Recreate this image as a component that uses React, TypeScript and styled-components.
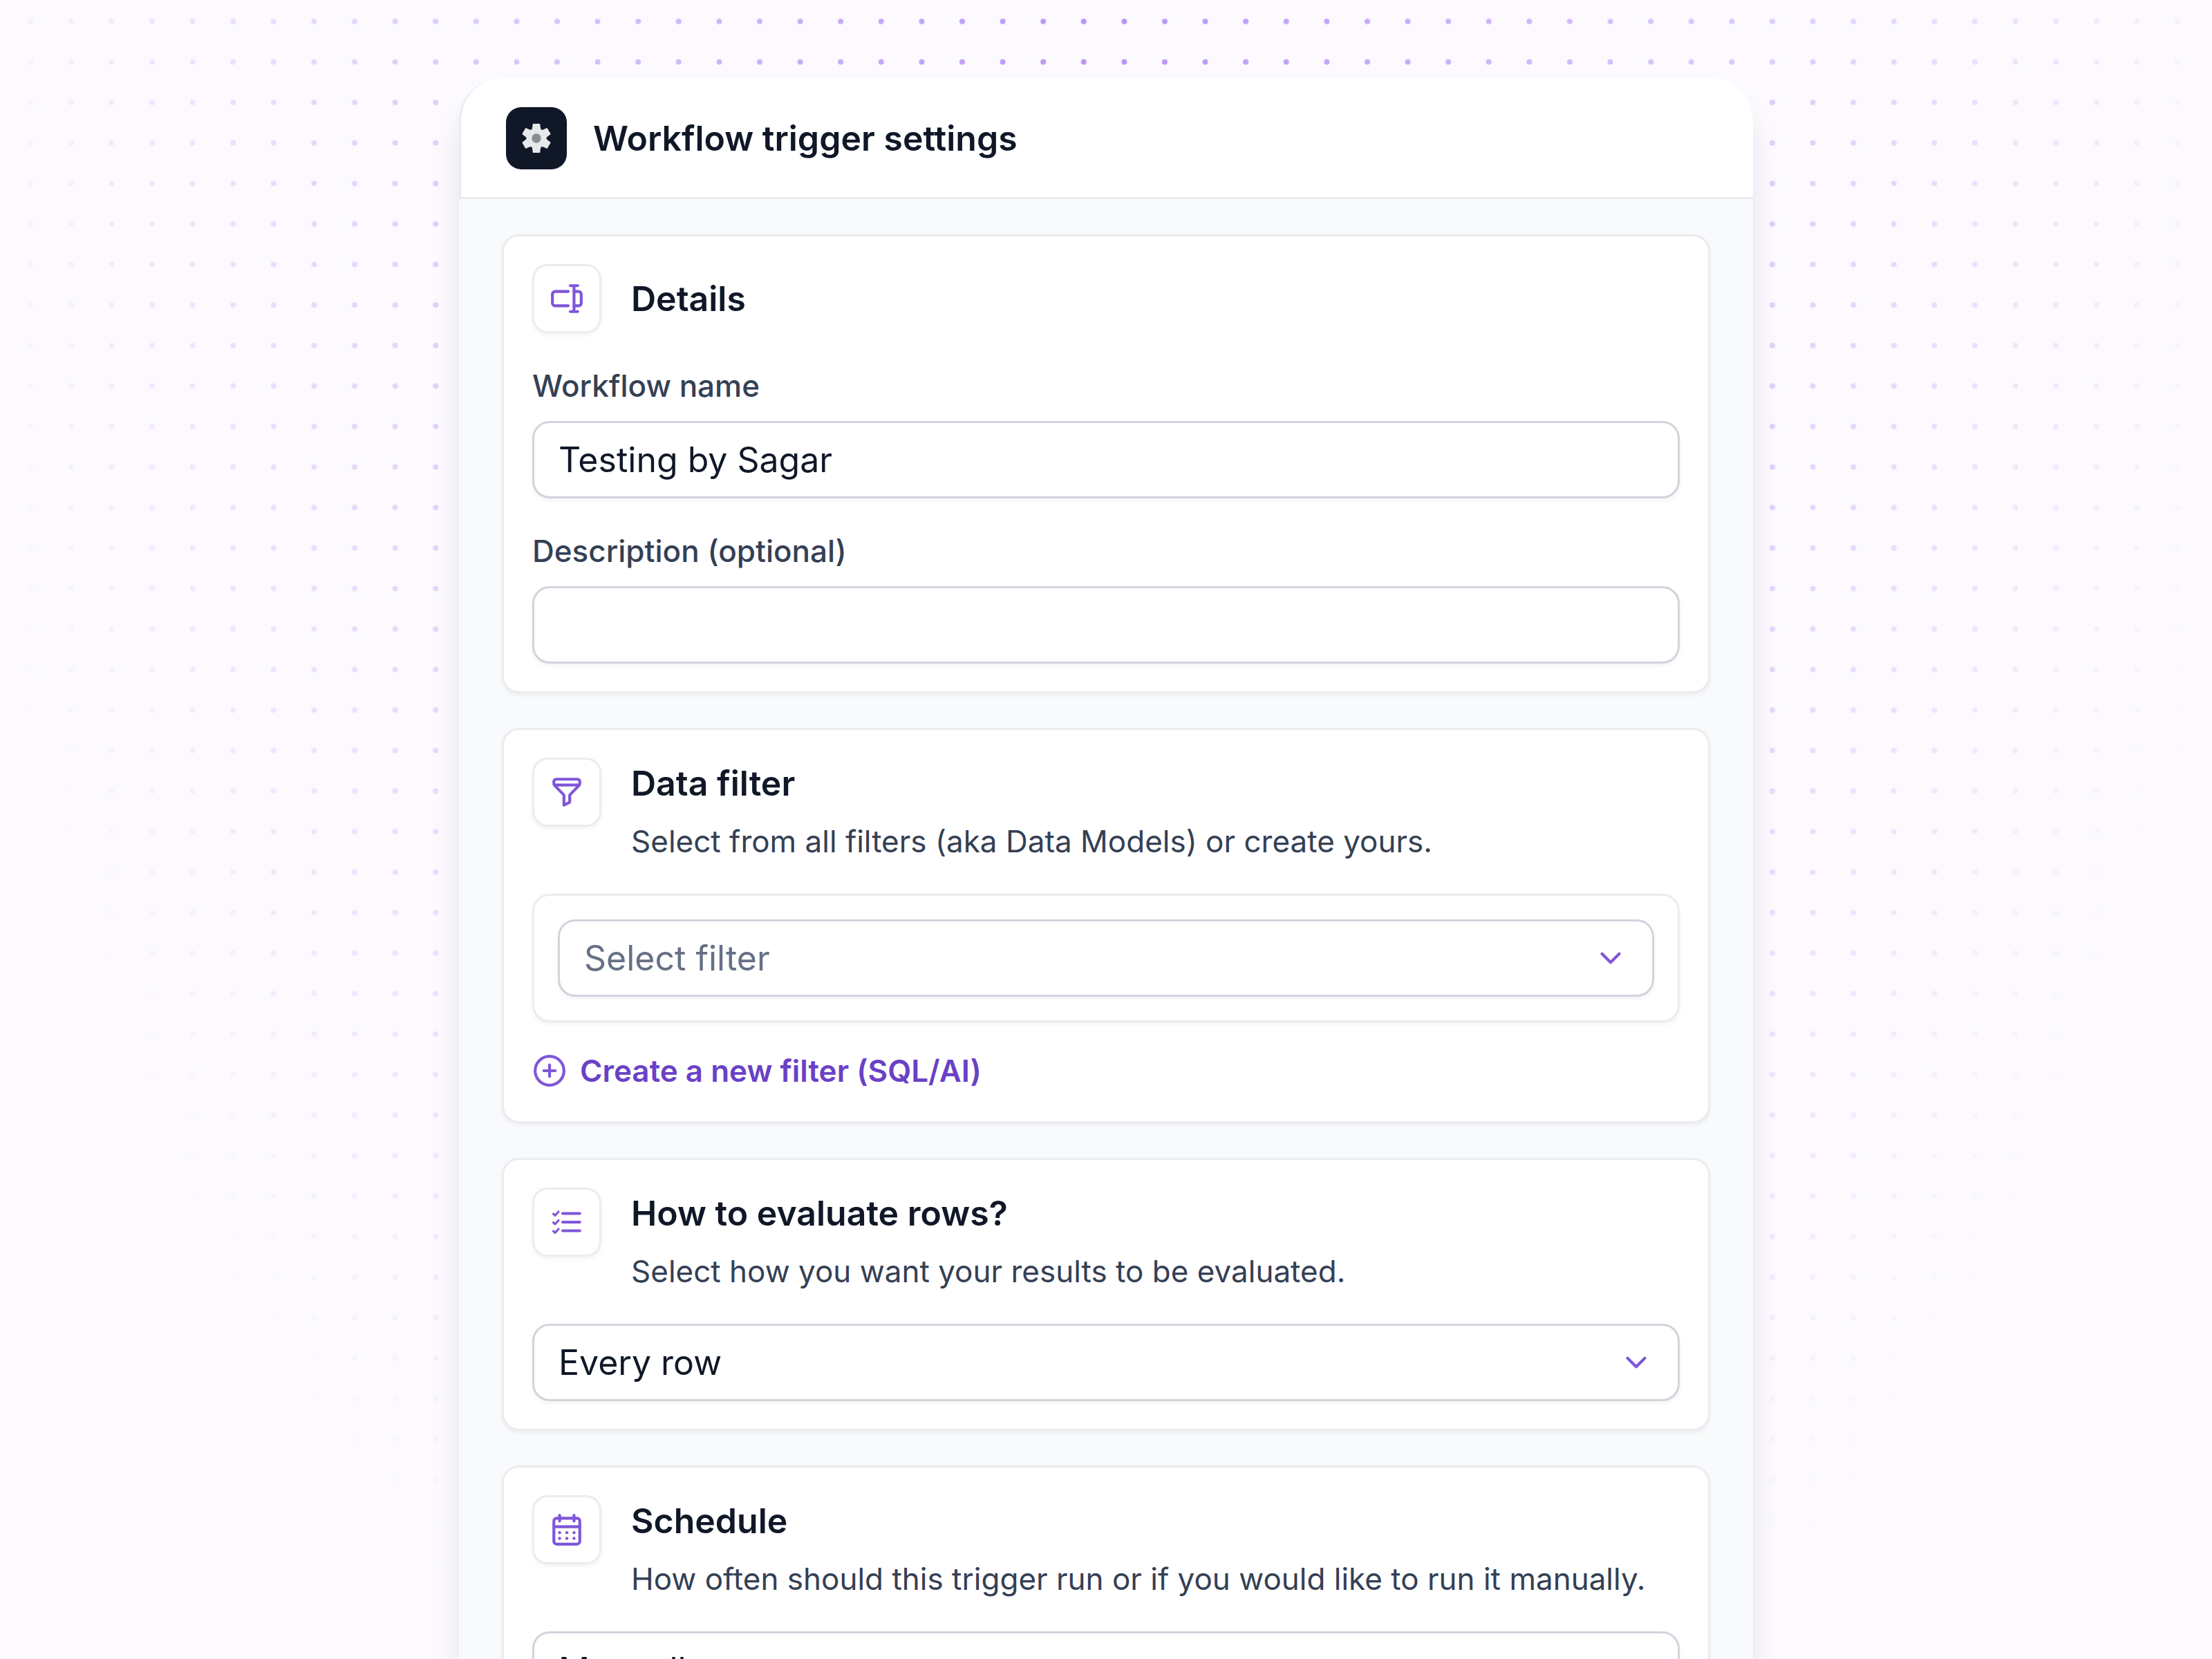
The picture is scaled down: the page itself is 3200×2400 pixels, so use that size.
import React, { useState } from "react";
import styled, { createGlobalStyle, css } from "styled-components";

const color = {
  ink: "#101828",
  body: "#344054",
  muted: "#667085",
  line: "#eaecf0",
  field: "#d0d5dd",
  purple: "#7f56d9",
  purpleDark: "#6941c6",
};

const GlobalStyle = createGlobalStyle`
  *, *::before, *::after { box-sizing: border-box; }
  html, body { margin: 0; background: #fcfaff; }
  body, input, select, button {
    font-family: Inter, "Liberation Sans", sans-serif;
    font-variant-ligatures: none;
  }
`;

const Page = styled.main`
  position: relative;
  height: 100vh;
  overflow-y: auto;
  scrollbar-width: none;
  padding: 113px 24px 0;
  background: #fcfaff;
`;

const Dots = styled.svg`
  position: absolute;
  inset: 0;
  width: 100%;
  height: 100%;
  pointer-events: none;
  mask-image: radial-gradient(ellipse 53% 117% at 50% 0, #000, transparent);
`;

const Panel = styled.div`
  position: relative;
  max-width: 1872px;
  margin: 0 auto;
  border-radius: 62px 62px 0 0;
  box-shadow: 0 38px 50px -12px rgba(16, 24, 40, 0.16);
`;

const PanelHeader = styled.header`
  display: flex;
  align-items: center;
  gap: 38px;
  padding: 42px 65px 40px;
  background: #fff;
  border-left: 3px solid ${color.line};
  border-bottom: 3px solid ${color.line};
  border-radius: 62px 62px 0 0;
`;

const AppBadge = styled.span`
  display: grid;
  place-items: center;
  width: 88px;
  height: 90px;
  border-radius: 22px;
  background: ${color.ink};
`;

const heading = css`
  margin: 0;
  color: ${color.ink};
  font-size: 50px;
  font-weight: 600;
  line-height: 75px;
`;

const PanelTitle = styled.h1`
  ${heading}
`;

const PanelBody = styled.div`
  display: flex;
  flex-direction: column;
  gap: 50px;
  padding: 51px 62px;
  background: #f9fafb;
`;

const Card = styled.section`
  padding: 40px 41px;
  border: 3px solid ${color.line};
  border-radius: 25px;
  background: #fff;
  box-shadow: 0 3px 6px rgba(16, 24, 40, 0.05);
`;

const CardHeader = styled.div<{ $single?: boolean }>`
  display: flex;
  align-items: ${(p) => (p.$single ? "center" : "flex-start")};
  gap: 43px;
  margin-bottom: 45px;
`;

const IconBox = styled.span`
  display: grid;
  place-items: center;
  flex: none;
  width: 100px;
  height: 100px;
  border: 3px solid ${color.line};
  border-radius: 22px;
  background: #fff;
  box-shadow: 0 3px 6px rgba(16, 24, 40, 0.05);
`;

const CardTitle = styled.h2`
  ${heading}
`;

const CardText = styled.p`
  margin: 15px 0 0;
  color: ${color.body};
  font-size: 44px;
  line-height: 62px;
`;

const FieldStack = styled.div`
  display: flex;
  flex-direction: column;
  gap: 45px;
`;

const Field = styled.div`
  display: flex;
  flex-direction: column;
  gap: 20px;
`;

const Label = styled.label`
  color: ${color.body};
  font-size: 44px;
  font-weight: 500;
  line-height: 62px;
`;

const control = css`
  width: 100%;
  height: 112px;
  margin: 0;
  padding: 0 35px;
  border: 3px solid ${color.field};
  border-radius: 25px;
  background: #fff;
  color: ${color.ink};
  font-size: 50px;
  line-height: 75px;
  outline: none;
  box-shadow: 0 3px 6px rgba(16, 24, 40, 0.05);
`;

const TextInput = styled.input`
  ${control}
`;

const SelectShell = styled.div`
  display: grid;
  align-items: center;

  > * {
    grid-area: 1 / 1;
  }

  > svg {
    justify-self: end;
    margin-right: 38px;
    pointer-events: none;
  }
`;

const NativeSelect = styled.select<{ $placeholder?: boolean }>`
  ${control}
  appearance: none;
  padding-right: 100px;
  color: ${(p) => (p.$placeholder ? color.muted : color.ink)};
`;

const FilterBox = styled.div`
  padding: 34px;
  border: 3px solid ${color.line};
  border-radius: 25px;
  box-shadow: 0 3px 6px rgba(16, 24, 40, 0.05);
`;

const LinkButton = styled.button`
  display: flex;
  align-items: center;
  gap: 19px;
  margin: 37px 0 0;
  padding: 2px 0;
  border: 0;
  background: none;
  color: ${color.purpleDark};
  font-size: 44px;
  font-weight: 600;
  line-height: 62px;
  cursor: pointer;
`;

const StrokeIcon = ({ children }: { children: React.ReactNode }) => (
  <svg
    width="50"
    height="50"
    viewBox="0 0 20 20"
    fill="none"
    stroke={color.purple}
    strokeWidth="1.667"
    strokeLinecap="round"
    strokeLinejoin="round"
    aria-hidden="true"
  >
    {children}
  </svg>
);

const RenameIcon = () => (
  <StrokeIcon>
    <path d="M10.8 5.83H3.33a1.67 1.67 0 0 0-1.67 1.67v5a1.67 1.67 0 0 0 1.67 1.67h7.47" />
    <path d="M14.17 5.83h2.5a1.67 1.67 0 0 1 1.67 1.67v5a1.67 1.67 0 0 1-1.67 1.67h-2.5" />
    <path d="M14.17 2.5v15M12 2.5h4.3M12 17.5h4.3" />
  </StrokeIcon>
);

const FunnelIcon = () => (
  <StrokeIcon>
    <path d="M3.8 2.5h12.4a1.3 1.3 0 0 1 1.3 1.3v1.1c0 .5-.2.9-.5 1.25l-5.33 5.5v4.18L8.33 17.5v-5.85L3 6.15A1.8 1.8 0 0 1 2.5 4.9V3.8a1.3 1.3 0 0 1 1.3-1.3z" />
    <path d="M3 5.83h14" />
  </StrokeIcon>
);

const ChecklistIcon = () => (
  <StrokeIcon>
    <path d="M7.6 5h9.9M7.6 10h9.9M7.6 15h9.9" />
    <path
      strokeWidth="1.25"
      d="M2.2 5.2l1 .95L5.2 4M2.2 10.2l1 .95L5.2 9M2.2 15.2l1 .95L5.2 14"
    />
  </StrokeIcon>
);

const CalendarIcon = () => (
  <StrokeIcon>
    <rect x="2.5" y="3.33" width="15" height="15" rx="1.67" />
    <path d="M5.83 1.67V5M14.17 1.67V5M2.5 8.25h15" />
    <g fill={color.purple} stroke="none">
      {[11.67, 15].map((y) =>
        [5.83, 10, 14.17].map((x) => (
          <circle key={`${x}-${y}`} cx={x} cy={y} r="0.87" />
        ))
      )}
    </g>
  </StrokeIcon>
);

const PlusCircleIcon = () => (
  <StrokeIcon>
    <circle cx="10" cy="10" r="8.33" />
    <path d="M10 6.67v6.66M6.67 10h6.66" />
  </StrokeIcon>
);

const ChevronIcon = () => (
  <StrokeIcon>
    <path d="M5 7.5l5 5 5-5" />
  </StrokeIcon>
);

/* Six teeth joined by rounded valleys, one turn of 60 degrees each. */
const gearPath = (() => {
  const at = (x: number, y: number, turn: number) => {
    const a = (turn * Math.PI) / 3;
    const px = x * Math.cos(a) - y * Math.sin(a);
    const py = x * Math.sin(a) + y * Math.cos(a);
    return `${px.toFixed(1)} ${py.toFixed(1)}`;
  };
  let d = "";
  for (let k = 0; k < 6; k++) {
    d += `${k ? "L" : "M"}${at(-13, -60, k)}L${at(13, -60, k)}L${at(15, -44, k)}`;
    d += `Q${at(17, -30, k)} ${at(-15, -44, k + 1)}`;
  }
  return d + "Z";
})();

const GearIcon = () => (
  <svg width="44" height="44" viewBox="-66 -66 132 132" aria-hidden="true">
    <path
      d={gearPath}
      fill="#e7e8ea"
      stroke="#e7e8ea"
      strokeWidth="6"
      strokeLinejoin="round"
    />
    <circle r="20" fill="#888c94" />
  </svg>
);

type SelectProps = {
  label: string;
  options: string[];
  placeholder?: string;
};

const Select = ({ label, options, placeholder }: SelectProps) => {
  const [value, setValue] = useState(placeholder ? "" : options[0]);
  return (
    <SelectShell>
      <NativeSelect
        aria-label={label}
        value={value}
        $placeholder={value === ""}
        onChange={(e) => setValue(e.target.value)}
      >
        {placeholder && <option value="">{placeholder}</option>}
        {options.map((o) => (
          <option key={o} value={o}>
            {o}
          </option>
        ))}
      </NativeSelect>
      <ChevronIcon />
    </SelectShell>
  );
};

type SectionProps = {
  icon: React.ReactNode;
  title: string;
  text?: string;
  children: React.ReactNode;
};

const Section = ({ icon, title, text, children }: SectionProps) => (
  <Card>
    <CardHeader $single={!text}>
      <IconBox>{icon}</IconBox>
      <div>
        <CardTitle>{title}</CardTitle>
        {text && <CardText>{text}</CardText>}
      </div>
    </CardHeader>
    {children}
  </Card>
);

export default function App() {
  const [name, setName] = useState("Testing by Sagar");
  const [description, setDescription] = useState("");

  return (
    <>
      <GlobalStyle />
      <Page>
        <Dots aria-hidden="true">
          <defs>
            <pattern
              id="dot-grid"
              x="14.9"
              y="1.7"
              width="58.6"
              height="58.6"
              patternUnits="userSpaceOnUse"
            >
              <circle cx="29.3" cy="29.3" r="4" fill="#b692f6" />
            </pattern>
          </defs>
          <rect width="100%" height="100%" fill="url(#dot-grid)" />
        </Dots>
        <Panel>
          <PanelHeader>
            <AppBadge>
              <GearIcon />
            </AppBadge>
            <PanelTitle>Workflow trigger settings</PanelTitle>
          </PanelHeader>
          <PanelBody>
            <Section icon={<RenameIcon />} title="Details">
              <FieldStack>
                <Field>
                  <Label htmlFor="workflow-name">Workflow name</Label>
                  <TextInput
                    id="workflow-name"
                    value={name}
                    onChange={(e) => setName(e.target.value)}
                  />
                </Field>
                <Field>
                  <Label htmlFor="workflow-description">
                    Description (optional)
                  </Label>
                  <TextInput
                    id="workflow-description"
                    value={description}
                    onChange={(e) => setDescription(e.target.value)}
                  />
                </Field>
              </FieldStack>
            </Section>
            <Section
              icon={<FunnelIcon />}
              title="Data filter"
              text="Select from all filters (aka Data Models) or create yours."
            >
              <FilterBox>
                <Select
                  label="Data filter"
                  placeholder="Select filter"
                  options={[]}
                />
              </FilterBox>
              <LinkButton type="button">
                <PlusCircleIcon />
                Create a new filter (SQL/AI)
              </LinkButton>
            </Section>
            <Section
              icon={<ChecklistIcon />}
              title="How to evaluate rows?"
              text="Select how you want your results to be evaluated."
            >
              <Select label="How to evaluate rows" options={["Every row"]} />
            </Section>
            <Section
              icon={<CalendarIcon />}
              title="Schedule"
              text="How often should this trigger run or if you would like to run it manually."
            >
              <Select label="Schedule" options={["Manually"]} />
            </Section>
          </PanelBody>
        </Panel>
      </Page>
    </>
  );
}
